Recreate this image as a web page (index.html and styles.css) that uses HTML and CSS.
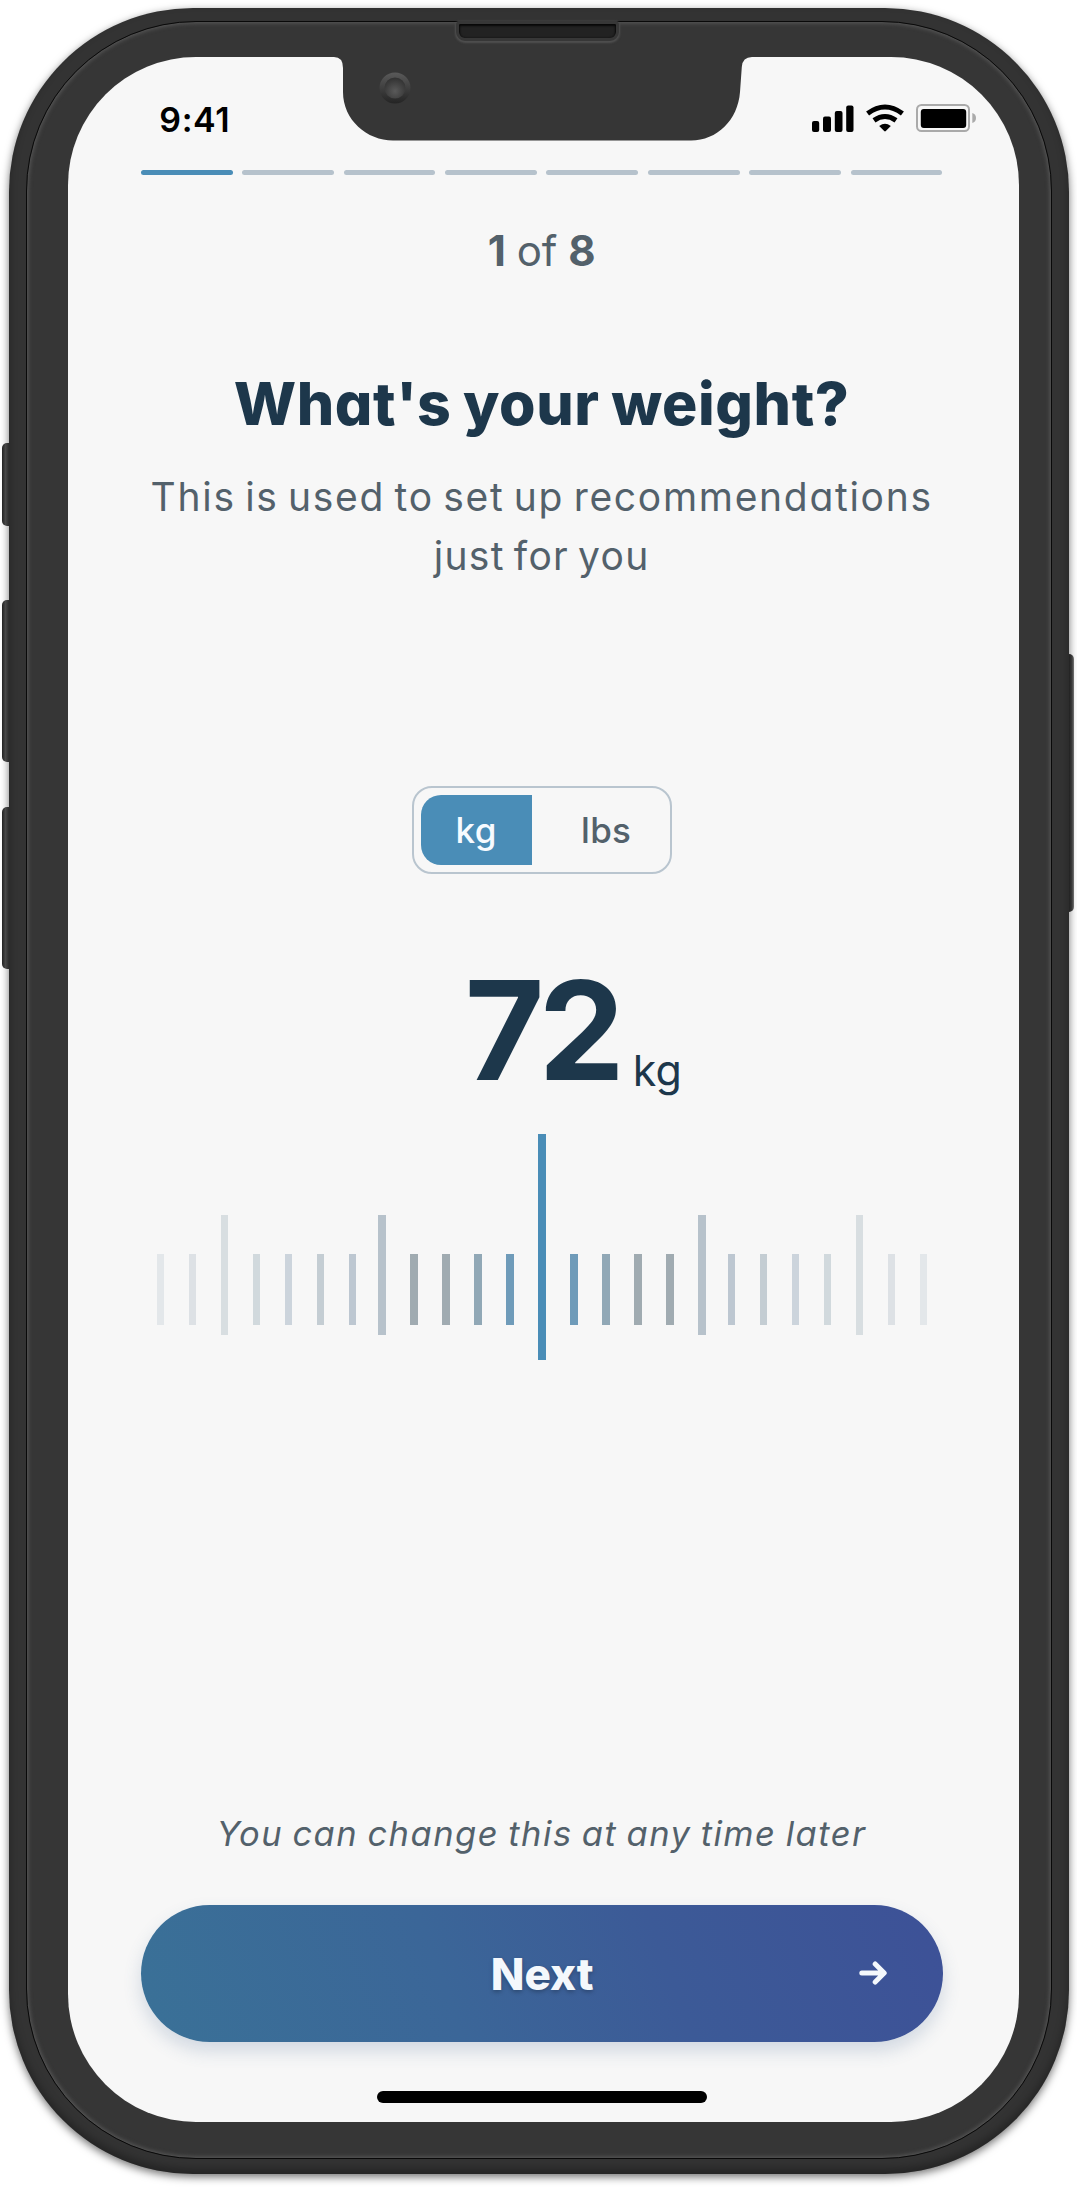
FILE: index.html
```html
<!DOCTYPE html>
<html lang="en">
<head>
<meta charset="utf-8">
<title>What's your weight?</title>
<link rel="stylesheet" href="styles.css">
</head>
<body>
<div class="phone">
  <span class="key key-mute"></span>
  <span class="key key-up"></span>
  <span class="key key-down"></span>
  <span class="key key-power"></span>
  <div class="bezel">
    <span class="speaker"></span>
    <main class="screen">
      <svg class="notch" width="430" height="85" viewBox="0 0 430 85">
        <defs>
          <linearGradient id="ring" x1="0" y1="0" x2="0" y2="1"><stop offset="0" stop-color="#5a5a5a"/><stop offset="1" stop-color="#242424"/></linearGradient>
          <radialGradient id="lens" cx=".5" cy=".65" r=".6"><stop offset="0" stop-color="#5a5a5a"/><stop offset="1" stop-color="#343434"/></radialGradient>
        </defs>
        <path fill="#363636" d="M0 0h428v1h-9Q409.500 1 408.800 11L407 36C405 64 384 84.500 358 84.500H60C34 84.500 10 64 10 36V12Q10 1 1 1H0z"/>
        <circle cx="62" cy="32" r="15.500" fill="url(#ring)"/>
        <circle cx="62" cy="32" r="10.500" fill="url(#lens)"/>
      </svg>
      <header class="status">
        <span class="time">9:41</span>
        <svg class="status-icons" width="165" height="28" viewBox="0 0 165 28">
          <rect x="0" y="17" width="7.200" height="11" rx="2"/>
          <rect x="11" y="12.500" width="8" height="15.500" rx="2"/>
          <rect x="22.800" y="7" width="7.700" height="21" rx="2"/>
          <rect x="34.200" y="1.500" width="7.300" height="26.500" rx="2"/>
          <g fill="none" stroke="#000" stroke-width="5">
            <path d="M55.600 9.500Q73 -3.500 90.400 9.500"/>
            <path d="M62 16.400Q73 8.500 84 16.400"/>
          </g>
          <path d="M67.200 22Q73 17.600 78.800 22L73.800 27Q73 27.800 72.200 27z"/>
          <rect x="105" y="1" width="52" height="26" rx="4.500" fill="none" stroke="#aaa" stroke-width="2"/>
          <rect x="108.800" y="5" width="45.400" height="19" rx="3"/>
          <path d="M160.300 9Q164 10 164 14T160.300 19z" fill="#aaa"/>
        </svg>
      </header>
      <div class="progress">
        <i class="step step-done"></i><i class="step"></i><i class="step"></i><i class="step"></i><i class="step"></i><i class="step"></i><i class="step"></i><i class="step"></i>
      </div>
      <p class="counter"><b>1</b> of <b>8</b></p>
      <h1 class="title">What's your weight?</h1>
      <p class="subtitle">This is used to set up recommendations<br><span class="sub-end">just for you</span></p>
      <div class="toggle">
        <button class="unit unit-on">kg</button>
        <button class="unit">lbs</button>
      </div>
      <div class="value"><span class="number">72</span><span class="value-unit">kg</span></div>
      <div class="ruler">
        <i class="tick c1"></i><i class="tick c2"></i><i class="tick tall c3"></i><i class="tick c4"></i><i class="tick c5"></i><i class="tick c6"></i><i class="tick c7 near"></i><i class="tick tall c8"></i><i class="tick c9"></i><i class="tick c9"></i><i class="tick c10"></i><i class="tick c11"></i><i class="tick current"></i><i class="tick c11"></i><i class="tick c10"></i><i class="tick c9"></i><i class="tick c9"></i><i class="tick tall c8 near"></i><i class="tick c7"></i><i class="tick c6"></i><i class="tick c5"></i><i class="tick c4"></i><i class="tick tall c3"></i><i class="tick c2"></i><i class="tick c1"></i>
      </div>
      <p class="note">You can change this at any time later</p>
      <button class="next">
        <span class="next-label">Next</span>
        <svg class="arrow" width="28" height="24" viewBox="0 0 28 24"><path d="M2.800 12H24M16.200 3L25.200 12L16.200 21" fill="none" stroke="#f4f8fc" stroke-width="5" stroke-linecap="round" stroke-linejoin="round"/></svg>
      </button>
      <div class="home"></div>
    </main>
  </div>
</div>
</body>
</html>
```
FILE: styles.css
```css
* { box-sizing: border-box; }
body {
  margin: 0;
  height: 2192px;
  overflow: hidden;
  background: #fff;
  font-family: Inter, "Open Sans", sans-serif;
  font-feature-settings: "cv11";
  color: #53616b;
}
p, h1 { margin: 0; }
button { border: 0; background: none; font: inherit; font-feature-settings: inherit; color: inherit; padding: 0; }

.phone {
  position: relative;
  width: 1059.5px;
  height: 2166px;
  margin: 8px 0 0 9px;
  padding: 12.5px 16.5px 15.5px 16.5px;
  border-radius: 184px;
  background: #333;
  box-shadow: 0 3px 9px rgba(0,0,0,.55), inset 0 -5px 8px rgba(0,0,0,.3);
}
.bezel {
  position: relative;
  height: 2138px;
  padding: 35px 31px 34px 41px;
  border-radius: 170px;
  border: 1.5px solid #090909;
  background: #363636;
  box-shadow: inset 0 0 4px 1px #5c5c5c;
}
.key {
  position: absolute;
  left: -7px;
  width: 7px;
  border-radius: 5px 0 0 5px;
  background: linear-gradient(90deg, #222, #484848 50%, #2b2b2b);
}
.key-mute { top: 434.5px; height: 83.5px; }
.key-up { top: 592px; height: 162px; }
.key-down { top: 798.5px; height: 162px; }
.key-power {
  left: auto;
  right: -5.5px;
  top: 646px;
  width: 5.5px;
  height: 258px;
  border-radius: 0 5px 5px 0;
  background: linear-gradient(90deg, #202020, #3c3c3c 60%, #777);
}
.speaker {
  position: absolute;
  left: 429px;
  top: -1px;
  width: 163px;
  height: 20px;
  border: 3.5px solid #373737;
  border-radius: 4px 4px 9px 9px;
  background: #222;
  box-shadow: 0 1px 2px 1px #505050, inset 0 1px 2px 1px #080808;
}
.screen {
  position: relative;
  width: 951px;
  height: 2065px;
  margin-top: .5px;
  padding: 0 76px 0 73.3px;
  border-radius: 128px;
  background: #f7f7f7;
  display: flex;
  flex-direction: column;
}
.notch { position: absolute; left: 265px; top: -1px; }

.status {
  height: 113px;
  margin-right: -34px;
  padding: 43px 0 0 18.5px;
  display: flex;
  justify-content: space-between;
  align-items: flex-start;
  color: #000;
}
.time { font-size: 34px; line-height: 40px; font-weight: 600; letter-spacing: .6px; }
.status-icons { margin-top: 4px; }

.progress { display: flex; gap: 9.7px; height: 5px; }
.step { flex: 1; border-radius: 3px; background: #b6c2cc; }
.step-done { background: #4a8db7; }

.counter { margin-top: 45.6px; font-size: 42px; line-height: 60px; word-spacing: -1px; text-align: center; }
.title {
  margin-top: 83.7px;
  font-size: 59px;
  line-height: 80px;
  font-weight: 800;
  letter-spacing: .6px;
  word-spacing: -2px;
  text-align: center;
  white-space: nowrap;
  color: #1d374b;
}
.subtitle { margin-top: 23.8px; font-size: 39px; line-height: 58.7px; letter-spacing: 1.7px; word-spacing: -3.2px; text-align: center; white-space: nowrap; }
.sub-end { letter-spacing: 1.3px; }

.toggle {
  align-self: center;
  margin-top: 200.2px;
  width: 260px;
  height: 88.6px;
  padding: 7.5px 7px;
  border: 2.3px solid #b9c5cf;
  border-radius: 20px;
  display: flex;
}
.unit { flex: 1; padding-left: 18px; font-size: 35px; line-height: 68px; font-weight: 500; letter-spacing: .3px; }
.unit-on { flex: none; width: 111px; padding: 0; border-radius: 20px 0 0 20px; background: #4a8db7; color: #f7fbff; }

.value {
  margin-top: 85.9px;
  height: 140px;
  padding-left: 324px;
  display: flex;
  align-items: flex-start;
  color: #1d374b;
}
.number { font-size: 137px; line-height: 140px; font-weight: 650; width: 168px; letter-spacing: -6px; }
.value-unit { font-size: 43px; line-height: 60px; margin-top: 80.3px; }

.ruler {
  margin: 33.8px 0 0 16px;
  height: 226.5px;
  display: flex;
  gap: 24.5px;
  align-items: flex-start;
}
.tick { flex: none; width: 7.5px; height: 71px; margin-top: 120px; }
.tall { height: 120.5px; margin-top: 81px; }
.near { margin-right: -2.5px; }
.current { height: 226.5px; margin-top: 0; background: #4a8db7; }
.c1 { background: #e3e7ea; }
.c2 { background: #dde1e5; }
.c3 { background: #d8dee1; }
.c4 { background: #d1d9dd; }
.c5 { background: #ccd4dc; }
.c6 { background: #c4cdd3; }
.c7 { background: #bdc7d1; }
.c8 { background: #b7c2cb; }
.c9 { background: #a0abb1; }
.c10 { background: #91a8b6; }
.c11 { background: #6f9bb9; }

.note { margin-top: 448.6px; font-size: 34.5px; line-height: 50px; letter-spacing: 1.5px; word-spacing: -2px; font-style: italic; text-align: center; white-space: nowrap; }
.next {
  margin-top: 45.6px;
  height: 137.3px;
  flex: none;
  padding-right: 56px;
  border-radius: 69px;
  background: linear-gradient(70deg, #3a7197, #3b6698 38%, #3c5a97 65%, #3d5197);
  box-shadow: 0 9px 18px rgba(60,95,140,.2);
  display: grid;
  grid-template-columns: 1fr auto;
  align-items: center;
  color: #f4f8fc;
}
.next-label { padding-left: 85px; font-size: 44px; font-weight: 800; line-height: 60px; position: relative; top: 1px; text-shadow: 0 2px 4px rgba(0,0,0,.25); }
.home { align-self: center; width: 330px; height: 12px; margin-top: 49.5px; border-radius: 6px; background: #000; }
```
